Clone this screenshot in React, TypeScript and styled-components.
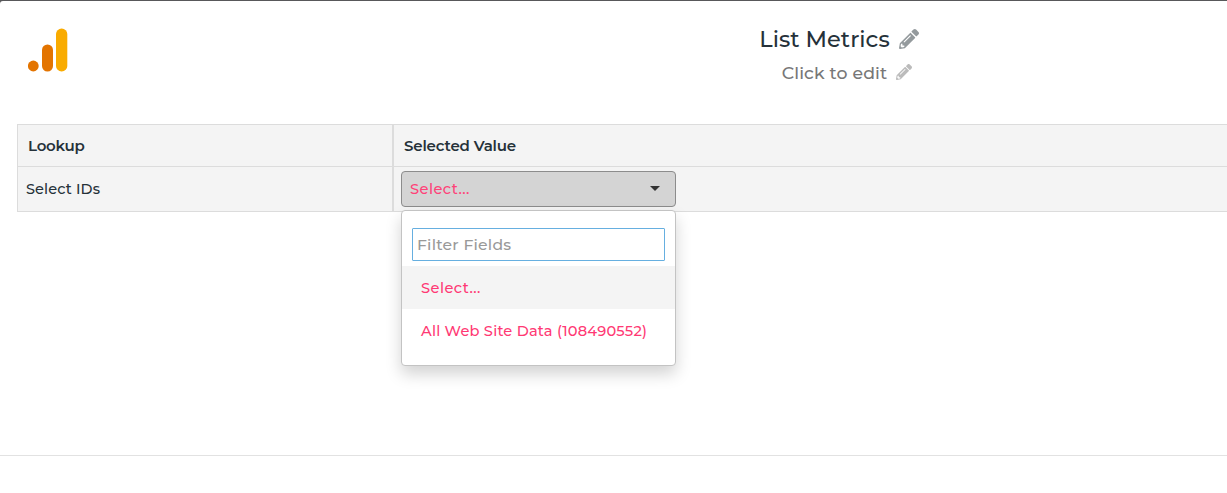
import React from "react";
import styled, { createGlobalStyle } from "styled-components";
import { FaPencilAlt } from "react-icons/fa";

const GlobalStyle = createGlobalStyle`
  * { box-sizing: border-box; }
  body {
    margin: 0;
    background: #fff;
    color: #253139;
    font-family: Montserrat, Inter, "Liberation Sans", sans-serif;
    overflow: hidden;
  }
`;

const Backdrop = styled.div`
  background: #58585a;
  padding-top: 1px;
`;

const Dialog = styled.div`
  display: flex;
  flex-direction: column;
  height: 492px;
  background: #fff;
  border-top-left-radius: 3px;
`;

const Header = styled.header`
  display: flex;
  height: 123px;
  flex-shrink: 0;
  padding: 27px 41px 0 28px;
`;

const Logo = styled.svg`
  display: block;
  width: 40px;
  height: 44px;
  flex-shrink: 0;
`;

const Titles = styled.div`
  flex: 1;
  display: flex;
  flex-direction: column;
  align-items: center;
  padding-left: 424px;
  margin-top: -6px;
`;

const Label = styled.span<{ $size: number; $spacing: number; $weight?: number }>`
  font-size: ${(p) => p.$size}px;
  font-weight: ${(p) => p.$weight ?? 500};
  letter-spacing: ${(p) => p.$spacing}px;
  white-space: nowrap;
`;

const Title = styled.div`
  display: flex;
  align-items: center;
  height: 34px;
  gap: 9px;
  svg { width: 20px; height: 20px; color: #949a9d; }
`;

const Subtitle = styled(Title)`
  height: 32px;
  margin-left: 16px;
  color: #777;
  svg { width: 16px; height: 16px; color: #bbb; }
`;

const Table = styled.div`
  display: grid;
  grid-template-columns: 376px 1fr;
  grid-template-rows: 42px 45px;
  flex-shrink: 0;
  margin-left: 17px;
  background: #f4f4f4;
  border-top: 1px solid #dcdcdc;
  border-left: 1px solid #dcdcdc;
`;

const Cell = styled.div<{ $pad: number; $divided?: boolean }>`
  display: flex;
  align-items: center;
  padding-left: ${(p) => p.$pad}px;
  border-bottom: 1px solid #dcdcdc;
  border-right: ${(p) => (p.$divided ? "2px solid #dcdcdc" : "0")};
`;

const Select = styled.div`
  position: relative;
  width: 275px;
  height: 36px;
`;

const Toggle = styled.button`
  display: flex;
  align-items: center;
  justify-content: space-between;
  width: 100%;
  height: 36px;
  padding: 0 15px 0 8px;
  font-family: inherit;
  color: #ff4278;
  background: #d4d4d4;
  border: 1px solid #8c8c8c;
  border-radius: 4px;
`;

const Caret = styled.span`
  margin-top: -1px;
  border: 5px solid transparent;
  border-top-color: #333;
  border-bottom: 0;
`;

const Menu = styled.div`
  position: absolute;
  top: 39px;
  left: 0;
  width: 275px;
  height: 156px;
  padding-top: 17px;
  background: #fff;
  border: 1px solid #c3c3c3;
  border-radius: 4px;
  box-shadow: 0 8px 16px rgba(0, 0, 0, 0.175);
`;

const Filter = styled.div`
  display: flex;
  align-items: center;
  height: 33px;
  margin: 0 10px 5px;
  padding-left: 4px;
  color: #999;
  border: 1px solid #66afe0;
  border-radius: 1px;
`;

const Option = styled.div<{ $active?: boolean }>`
  display: flex;
  align-items: center;
  height: 43px;
  padding-left: 19px;
  color: #ff3974;
  background: ${(p) => (p.$active ? "#f4f4f4" : "transparent")};
`;

const Footer = styled.footer`
  margin-top: auto;
  height: 38px;
  flex-shrink: 0;
  border-top: 1px solid #e2e2e2;
`;

export default function App() {
  return (
    <>
      <GlobalStyle />
      <Backdrop>
        <Dialog>
          <Header>
            <Logo viewBox="0 0 40 44">
              <circle cx="5.3" cy="38" r="5.4" fill="#e37400" />
              <rect x="14" y="16.5" width="11" height="27" rx="5.5" fill="#e37400" />
              <rect x="28" y="0.5" width="11.3" height="43" rx="5.6" fill="#f9ab00" />
            </Logo>
            <Titles>
              <Title>
                <Label $size={22.5} $spacing={0}>List Metrics</Label>
                <FaPencilAlt />
              </Title>
              <Subtitle>
                <Label $size={17.3} $spacing={0.14}>Click to edit</Label>
                <FaPencilAlt />
              </Subtitle>
            </Titles>
          </Header>
          <Table>
            <Cell $pad={10} $divided>
              <Label $size={15} $spacing={-0.25} $weight={600}>Lookup</Label>
            </Cell>
            <Cell $pad={10}>
              <Label $size={15} $spacing={-0.16} $weight={600}>Selected Value</Label>
            </Cell>
            <Cell $pad={8} $divided>
              <Label $size={14.5} $spacing={0.12}>Select IDs</Label>
            </Cell>
            <Cell $pad={7}>
              <Select>
                <Toggle>
                  <Label $size={14.6} $spacing={0.46}>Select...</Label>
                  <Caret />
                </Toggle>
                <Menu>
                  <Filter>
                    <Label $size={15.6} $spacing={0.22}>Filter Fields</Label>
                  </Filter>
                  <Option $active>
                    <Label $size={14.6} $spacing={0.46}>Select...</Label>
                  </Option>
                  <Option>
                    <Label $size={14.6} $spacing={0.21}>All Web Site Data (108490552)</Label>
                  </Option>
                </Menu>
              </Select>
            </Cell>
          </Table>
          <Footer />
        </Dialog>
      </Backdrop>
    </>
  );
}
